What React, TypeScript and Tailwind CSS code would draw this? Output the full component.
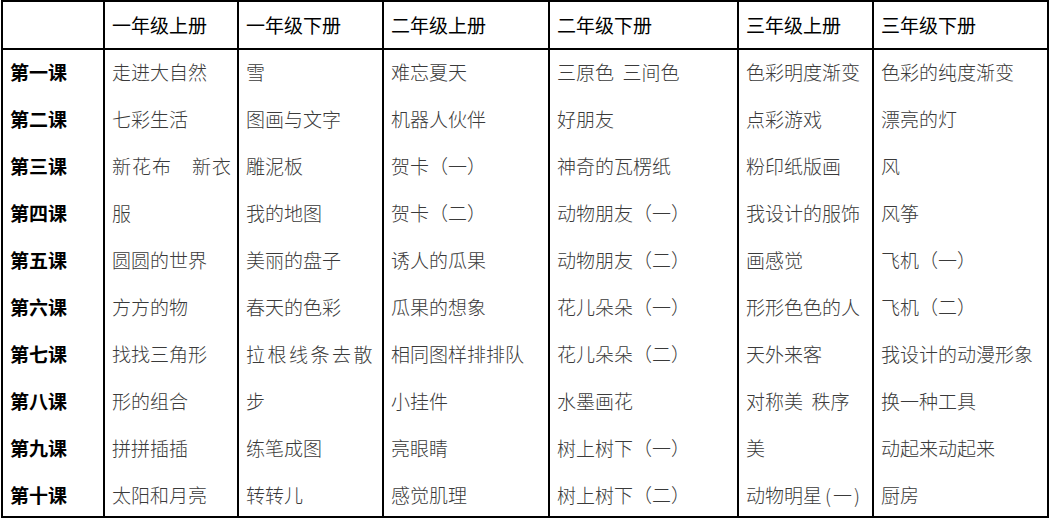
const headers = ["", "一年级上册", "一年级下册", "二年级上册", "二年级下册", "三年级上册", "三年级下册"];

const lessons = ["第一课", "第二课", "第三课", "第四课", "第五课", "第六课", "第七课", "第八课", "第九课", "第十课"];

const columns: string[][] = [
  ["走进大自然", "七彩生活", "新花布　新衣", "服", "圆圆的世界", "方方的物", "找找三角形", "形的组合", "拼拼插插", "太阳和月亮"],
  ["雪", "图画与文字", "雕泥板", "我的地图", "美丽的盘子", "春天的色彩", "拉根线条去散", "步", "练笔成图", "转转儿"],
  ["难忘夏天", "机器人伙伴", "贺卡（一）", "贺卡（二）", "诱人的瓜果", "瓜果的想象", "相同图样排排队", "小挂件", "亮眼睛", "感觉肌理"],
  ["三原色  三间色", "好朋友", "神奇的瓦楞纸", "动物朋友（一）", "动物朋友（二）", "花儿朵朵（一）", "花儿朵朵（二）", "水墨画花", "树上树下（一）", "树上树下（二）"],
  ["色彩明度渐变", "点彩游戏", "粉印纸版画", "我设计的服饰", "画感觉", "形形色色的人", "天外来客", "对称美  秩序", "美", "动物明星(一)"],
  ["色彩的纯度渐变", "漂亮的灯", "风", "风筝", "飞机（一）", "飞机（二）", "我设计的动漫形象", "换一种工具", "动起来动起来", "厨房"],
];

const sans = "font-['Noto_Sans_CJK_SC','Noto_Sans_CJK_JP',sans-serif]";

function Cell({ text }: { text: string }) {
  if (text === "动物明星(一)") {
    return (
      <>
        动物明星<span className="ml-[3px] mr-[2px]">(</span>一<span className="ml-[2px]">)</span>
      </>
    );
  }
  return <>{text}</>;
}

export default function App() {
  return (
    <div className="min-h-screen w-[1051px] bg-white">
      <div
        className={`ml-px grid w-[1048px] grid-cols-[102px_134px_145px_166px_189px_135px_175px] grid-rows-[48px_468px] border-l-2 border-t-2 border-black ${sans}`}
      >
        {headers.map((h, i) => (
          <div key={i} className="flex items-center border-b-2 border-r-2 border-black pl-[7px] text-[19px] font-normal text-black">
            {h}
          </div>
        ))}

        <div className="overflow-visible border-b-2 border-r-2 border-black pl-[7px]">
          <div className="-mt-[2px]">
            {lessons.map((l) => (
              <div key={l} className="text-[19px] font-bold leading-[47px] text-black">
                {l}
              </div>
            ))}
          </div>
        </div>

        {columns.map((col, ci) => (
          <div key={ci} className="overflow-visible border-b-2 border-r-2 border-black pl-[7px]">
            <div className="-mt-[2px]">
              {col.map((t, ri) => (
                <div
                  key={ri}
                  className={`whitespace-pre text-[19px] font-light leading-[47px] text-[#3a3a3a] ${
                    t === "拉根线条去散" ? "tracking-[2.5px]" : ""
                  } ${t === "新花布　新衣" ? "tracking-[1px]" : ""}`}
                >
                  <Cell text={t} />
                </div>
              ))}
            </div>
          </div>
        ))}
      </div>
    </div>
  );
}
